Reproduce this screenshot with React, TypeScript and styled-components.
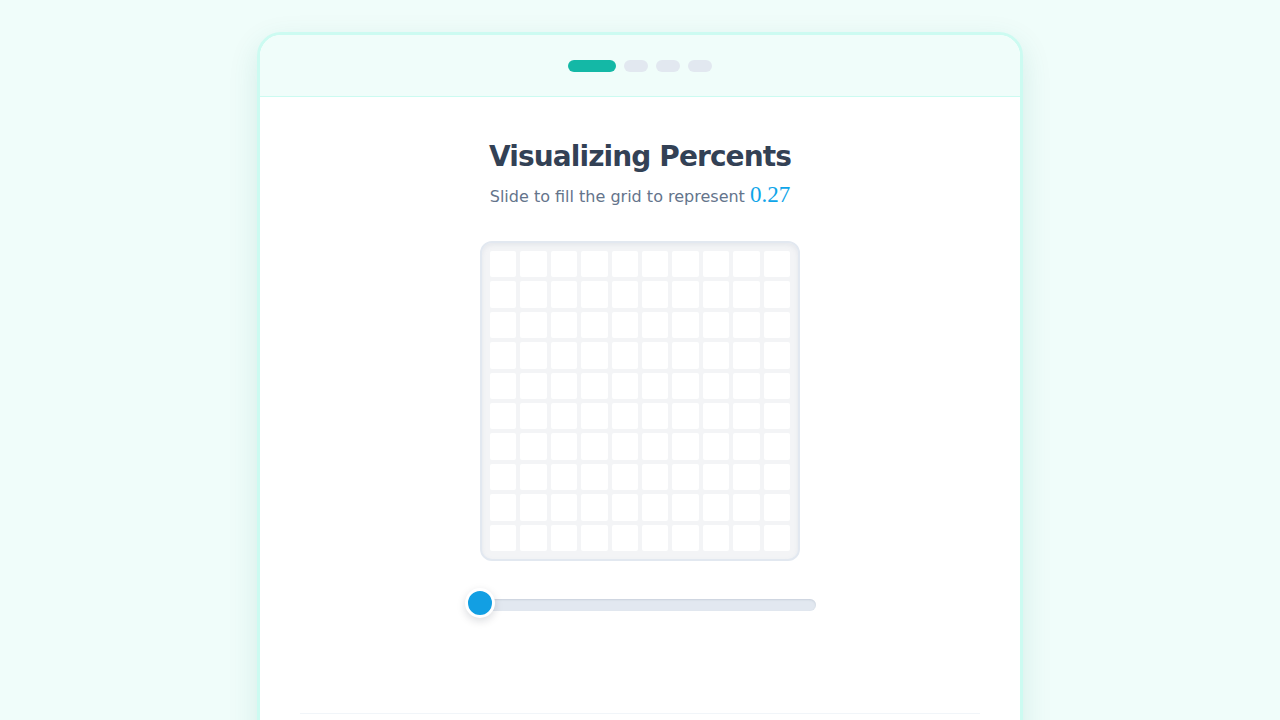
import { useState } from "react";
import styled, { createGlobalStyle } from "styled-components";

const GlobalStyle = createGlobalStyle`
  html, body {
    margin: 0;
    padding: 0;
    background: #f0fdfa;
    font-family: "DejaVu Sans", Verdana, sans-serif;
  }
`;

const Page = styled.div`
  min-height: 720px;
  padding-top: 32px;
  display: flex;
  justify-content: center;
  overflow: hidden;
`;

const Card = styled.div`
  width: 760px;
  height: 760px;
  border: 3px solid #ccfbf1;
  border-radius: 24px;
  background: #ffffff;
  box-shadow: 0 10px 30px rgba(15, 118, 110, 0.12);
  overflow: hidden;
  display: flex;
  flex-direction: column;
`;

const Header = styled.div`
  height: 61px;
  background: #f0fdfa;
  border-bottom: 1px solid #ccfbf1;
  display: flex;
  align-items: center;
  justify-content: center;
  gap: 8px;
`;

const Dot = styled.span<{ $active?: boolean }>`
  display: block;
  width: ${(p) => (p.$active ? "48px" : "24px")};
  height: 12px;
  border-radius: 6px;
  background: ${(p) => (p.$active ? "#14b8a6" : "#e2e8f0")};
`;

const Body = styled.div`
  flex: 1;
  padding: 42px 40px 0;
  display: flex;
  flex-direction: column;
  align-items: center;
`;

const Title = styled.h1`
  margin: 0;
  font-size: 28px;
  line-height: 36px;
  font-weight: 700;
  color: #334155;
  letter-spacing: -0.9px;
`;

const Subtitle = styled.p`
  margin: 6px 0 0;
  font-size: 16px;
  line-height: 28px;
  color: #64748b;
  letter-spacing: 0;
`;

const MathValue = styled.span`
  font-family: "Liberation Serif", "DejaVu Serif", serif;
  font-size: 23px;
  color: #0ea5e9;
`;

const GridBox = styled.div`
  margin-top: 30px;
  width: 300px;
  padding: 8px;
  border: 2px solid #e2e8f0;
  border-radius: 12px;
  background: #f3f4f6;
  box-shadow: inset 0 2px 4px rgba(148, 163, 184, 0.15);
  display: grid;
  grid-template-columns: repeat(10, 1fr);
  gap: 4px;
`;

const Cell = styled.div<{ $filled: boolean }>`
  height: 26.4px;
  border-radius: 2px;
  background: ${(p) => (p.$filled ? "#0ea5e9" : "#ffffff")};
`;

const SliderWrap = styled.div`
  margin-top: 38px;
  width: 352px;
  box-sizing: border-box;
  padding-left: 16px;
`;

const Track = styled.div`
  position: relative;
  height: 12px;
  border-radius: 6px;
  background: #e2e8f0;
  box-shadow: inset 0 1px 2px rgba(100, 116, 139, 0.2);
`;

const Thumb = styled.div`
  position: absolute;
  top: calc(50% - 2px);
  width: 24px;
  height: 24px;
  border-radius: 50%;
  background: #129fe3;
  border: 3px solid #ffffff;
  box-shadow: 0 3px 8px rgba(15, 23, 42, 0.15);
  transform: translate(-50%, -50%);
`;

const Divider = styled.div`
  margin-top: 102px;
  width: 100%;
  height: 1px;
  background: #f1f5f9;
`;

export default function App() {
  const [value] = useState(0);
  const cells = Array.from({ length: 100 }, (_, i) => i);

  return (
    <>
      <GlobalStyle />
      <Page>
        <Card>
          <Header>
            <Dot $active />
            <Dot />
            <Dot />
            <Dot />
          </Header>
          <Body>
            <Title>Visualizing Percents</Title>
            <Subtitle>
              Slide to fill the grid to represent <MathValue>0.27</MathValue>
            </Subtitle>
            <GridBox>
              {cells.map((i) => (
                <Cell key={i} $filled={i < value} />
              ))}
            </GridBox>
            <SliderWrap>
              <Track>
                <Thumb style={{ left: `${value}%` }} />
              </Track>
            </SliderWrap>
            <Divider />
          </Body>
        </Card>
      </Page>
    </>
  );
}
